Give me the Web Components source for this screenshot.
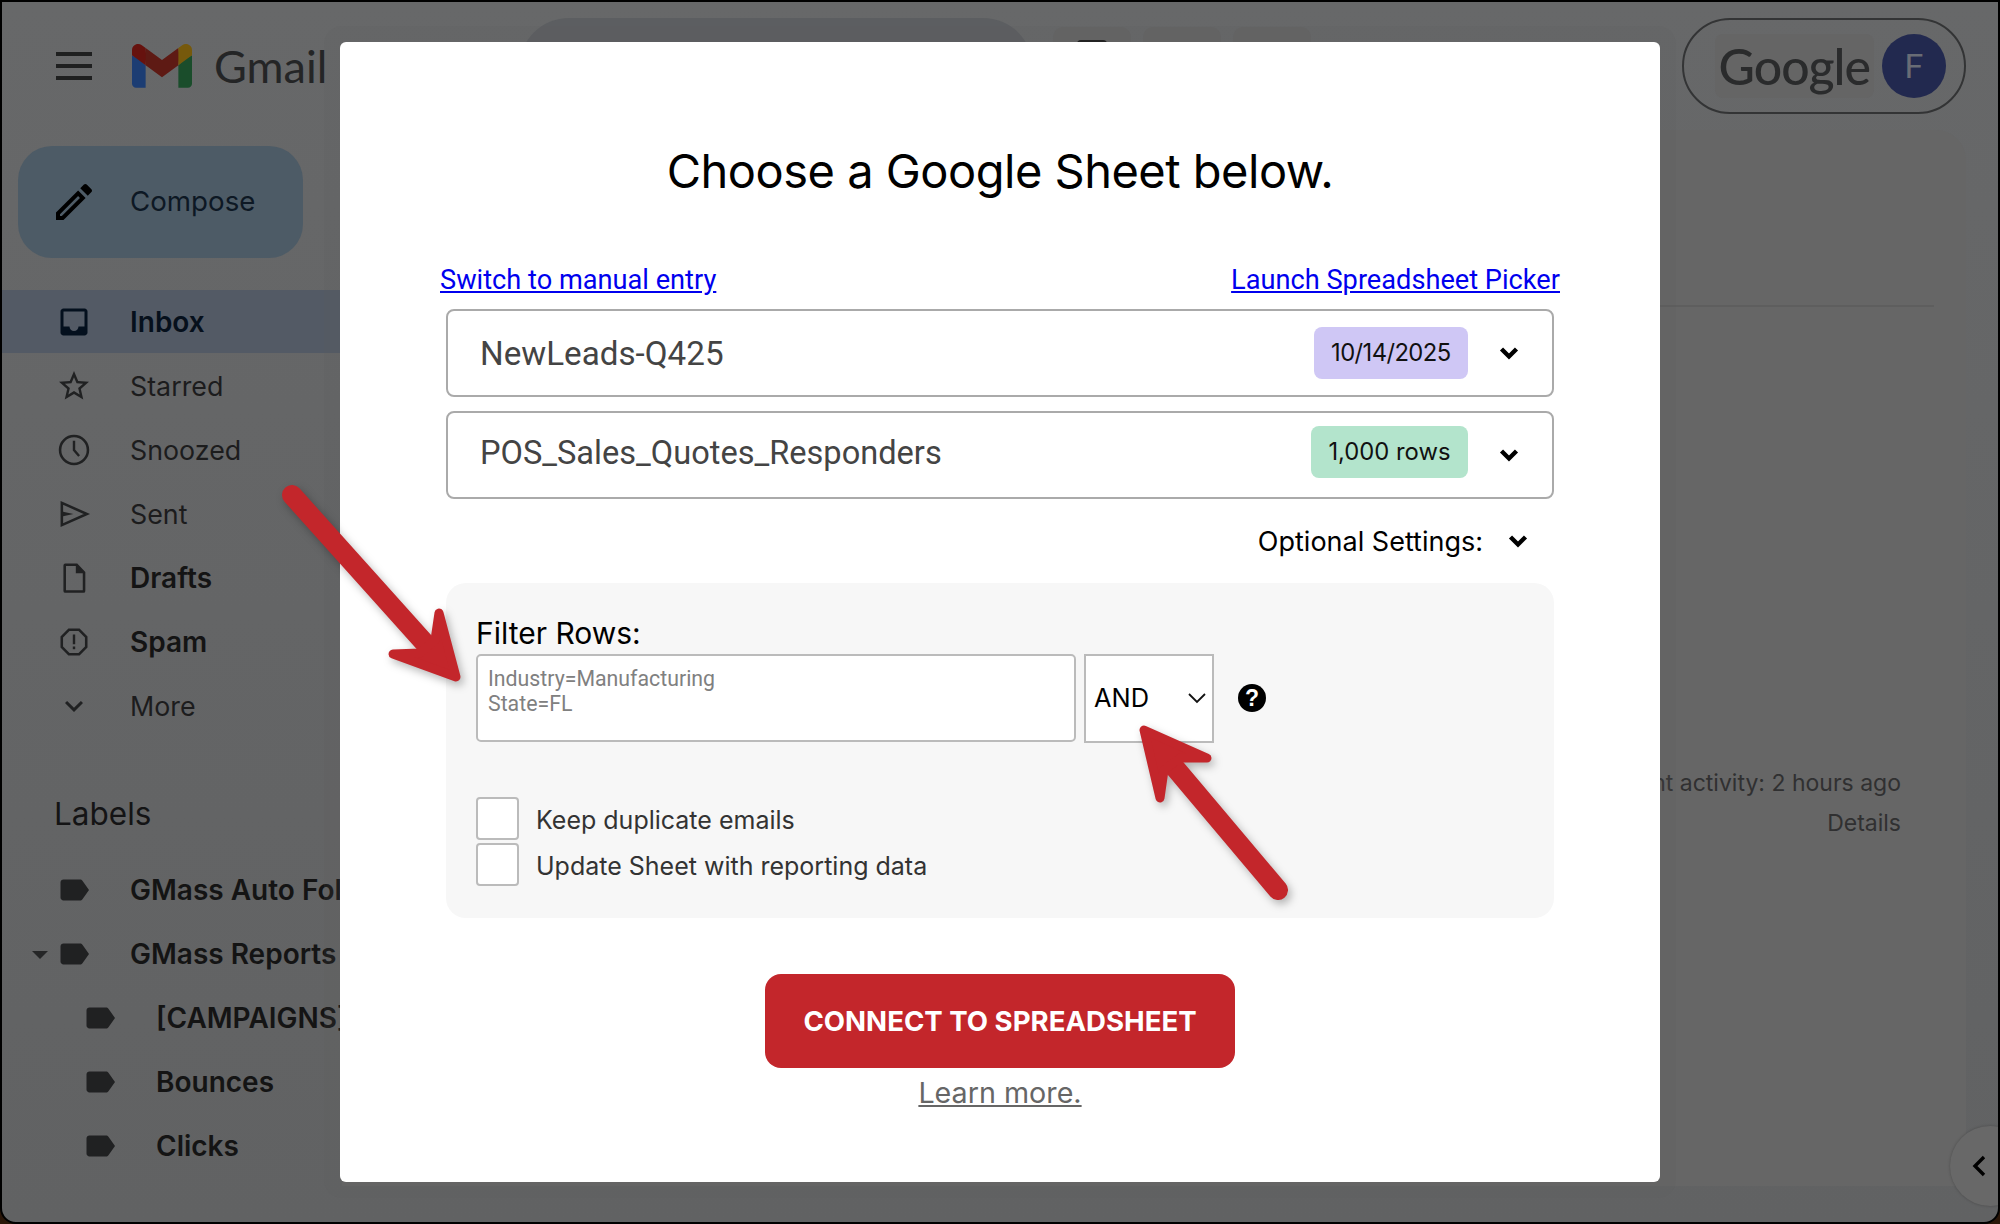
<!DOCTYPE html>
<html lang="en">
<head>
<meta charset="utf-8">
<title>Choose a Google Sheet</title>
<style>
  html, body { margin: 0; padding: 0; background: #000; }
  body { width: 2000px; height: 1224px; overflow: hidden; position: relative; font-family: "Inter", "Liberation Sans", sans-serif; }
</style>
</head>
<body>
<gm-shell>
  <gm-topbar slot="top"></gm-topbar>
  <gm-sidebar slot="side">
    <gm-nav icon="inbox" active bold>Inbox</gm-nav>
    <gm-nav icon="star">Starred</gm-nav>
    <gm-nav icon="clock">Snoozed</gm-nav>
    <gm-nav icon="sent">Sent</gm-nav>
    <gm-nav icon="draft" bold>Drafts</gm-nav>
    <gm-nav icon="spam" bold>Spam</gm-nav>
    <gm-nav icon="more">More</gm-nav>
    <gm-labels-title>Labels</gm-labels-title>
    <gm-nav icon="label" bold>GMass Auto Fol</gm-nav>
    <gm-nav icon="label" bold caret>GMass Reports</gm-nav>
    <gm-nav icon="label" bold sub>[CAMPAIGNS]</gm-nav>
    <gm-nav icon="label" bold sub>Bounces</gm-nav>
    <gm-nav icon="label" bold sub>Clicks</gm-nav>
  </gm-sidebar>
  <gm-main slot="main"></gm-main>
</gm-shell>

<sheet-modal>
  <sheet-select name="NewLeads-Q425" pill="10/14/2025" tone="#cfc7f5" tight></sheet-select>
  <sheet-select name="POS_Sales_Quotes_Responders" pill="1,000 rows" tone="#b3e4cc" lift></sheet-select>
</sheet-modal>

<red-arrows></red-arrows>

<script>
const ICONS = {
  inbox: '<path d="M19 3H5c-1.1 0-2 .9-2 2v14c0 1.1.9 2 2 2h14c1.1 0 2-.9 2-2V5c0-1.1-.9-2-2-2zm0 12h-4c0 1.66-1.35 3-3 3s-3-1.34-3-3H5V5h14v10z"/>',
  star: '<path d="M22 9.24l-7.19-.62L12 2 9.19 8.63 2 9.24l5.46 4.73L5.82 21 12 17.27 18.18 21l-1.63-7.03L22 9.24zM12 15.4l-3.76 2.27 1-4.28-3.32-2.88 4.38-.38L12 6.1l1.71 4.04 4.38.38-3.32 2.88 1 4.28L12 15.4z"/>',
  clock: '<circle cx="12" cy="12" r="9.3" fill="none" stroke="currentColor" stroke-width="1.7"/><path d="M12 5.8V12l3.4 4" fill="none" stroke="currentColor" stroke-width="1.6"/>',
  sent: '<path d="M3.9 4.6 20.6 12 3.9 19.4z" fill="none" stroke="currentColor" stroke-width="1.7" stroke-linejoin="miter"/><path d="M4 10.4l7.6 1.6L4 13.6z"/>',
  draft: '<path d="M6.2 3.2h7.6l4.9 5.2v12.2c0 .2-.2.4-.4.4H6.2c-.2 0-.4-.2-.4-.4V3.6c0-.2.2-.4.4-.4z" fill="none" stroke="currentColor" stroke-width="1.7"/><path d="M13.2 3v5.8h5.6z"/>',
  spam: '<path d="M15.73 3H8.27L3 8.27v7.46L8.27 21h7.46L21 15.73V8.27L15.73 3zM19.3 15L15 19.3H9L4.7 15V9L9 4.7h6L19.3 9v6z"/><rect x="11.2" y="7" width="1.6" height="6.5"/><rect x="11.2" y="15" width="1.6" height="1.8"/>',
  more: '<path d="M7.41 8.59L12 13.17l4.59-4.58L18 10l-6 6-6-6 1.41-1.41z"/>',
  label: '<path d="M17.63 5.84C17.27 5.33 16.67 5 16 5L5 5.01C3.9 5.01 3 5.9 3 7v10c0 1.1.9 1.99 2 1.99L16 19c.67 0 1.27-.33 1.63-.84L22 12l-4.37-6.16z"/>'
};

class GmShell extends HTMLElement {
  constructor() {
    super();
    this.attachShadow({ mode: 'open' }).innerHTML = `
      <style>
        :host { display: block; width: 2000px; height: 1224px; background: #2a1608; }
        .win {
          box-sizing: border-box; width: 2000px; height: 1224px;
          border: 2px solid #000; border-radius: 0 0 16px 16px;
          background: linear-gradient(#676869, #616263);
          display: grid; grid-template-columns: 340px 1fr; grid-template-rows: 128px 1fr;
          overflow: hidden;
        }
        .top { grid-column: 1 / 3; }
      </style>
      <div class="win">
        <div class="top"><slot name="top"></slot></div>
        <slot name="side"></slot>
        <slot name="main"></slot>
      </div>`;
  }
}

class GmTopbar extends HTMLElement {
  constructor() {
    super();
    this.attachShadow({ mode: 'open' }).innerHTML = `
      <style>
        :host { display: flex; align-items: flex-start; height: 128px; position: relative; color: #202122; }
        .burger { width: 36px; height: 28px; margin: 50px 0 0 54px; flex: none; display: flex; flex-direction: column; justify-content: space-between; }
        .burger i { display: block; height: 4px; background: #1f2020; }
        .logo { width: 60px; height: 44px; margin: 42px 0 0 40px; flex: none; }
        .name { margin: 32px 0 0 22px; font: 400 45px/64px "Lato", "Inter", sans-serif; color: #242526; flex: none; width: 305px; }
        .search { width: 514px; height: 100px; margin-top: 16px; background: #5c5e61; border-radius: 50px; flex: none; }
        .tools { display: flex; gap: 12px; margin: 25px 0 0 20px; flex: none; }
        .tools i { display: block; width: 78px; height: 60px; background: #656565; border-radius: 10px; overflow: hidden; }
        .tools i b { display: block; width: 30px; height: 24px; margin: 13px auto 0; background: #1a1a1a; border-radius: 4px 4px 0 0; }
        .pill {
          position: absolute; right: 32px; top: 16px; box-sizing: border-box;
          width: 284px; height: 96px; border: 2px solid #333435; border-radius: 48px;
          display: flex; align-items: center; justify-content: flex-end; padding-right: 18px; gap: 8px;
        }
        .brand { font: 500 50px/64px "Lato", "Inter", sans-serif; color: #2a2b2c; letter-spacing: -1px; background: #656565; border-radius: 8px; padding: 0 4px; }
        .avatar { width: 64px; height: 64px; border-radius: 50%; background: #22294f; color: #696c75; font: 400 34px/64px "Roboto", sans-serif; text-align: center; }
      </style>
      <div class="burger"><i></i><i></i><i></i></div>
      <svg class="logo" viewBox="0 0 256 193" preserveAspectRatio="none">
        <path fill="#1c3d73" d="M58.182 192.05V93.14L27.507 65.077 0 49.504v125.091c0 9.658 7.825 17.455 17.455 17.455h40.727z"/>
        <path fill="#1a4d2b" d="M197.818 192.05h40.727c9.659 0 17.455-7.826 17.455-17.455V49.505l-31.156 17.837-27.026 25.798v98.91z"/>
        <path fill="#5e1a14" d="M58.182 93.14l-4.174-38.647 4.174-36.989L128 69.868l69.818-52.364 4.669 34.992-4.669 40.644L128 145.504z"/>
        <path fill="#76590c" d="M197.818 17.504V93.14L256 49.504V26.231c0-21.585-24.64-33.89-41.89-20.945l-16.292 12.218z"/>
        <path fill="#66120e" d="M0 49.504l26.759 20.07L58.182 93.14V17.504L41.89 5.286C24.61-7.66 0 4.646 0 26.23v23.273z"/>
      </svg>
      <div class="name">Gmail</div>
      <div class="search"></div>
      <div class="tools"><i><b></b></i><i></i><i></i></div>
      <div class="pill"><span class="brand">Google</span><span class="avatar">F</span></div>`;
  }
}

class GmSidebar extends HTMLElement {
  constructor() {
    super();
    this.attachShadow({ mode: 'open' }).innerHTML = `
      <style>
        :host { display: block; width: 340px; overflow: hidden; }
        .compose {
          box-sizing: border-box; width: 285px; height: 112px; margin: 16px 0 32px 16px;
          background: #4d5b66; border-radius: 34px; display: flex; align-items: center; padding-left: 32px;
          font: 400 27.7px/1 "Inter", sans-serif; color: #0d1824;
        }
        .compose svg { width: 48px; height: 48px; margin-right: 32px; flex: none; fill: #000; }
      </style>
      <div class="compose">
        <svg viewBox="0 0 24 24"><path d="M3 17.25V21h3.75L17.81 9.94l-3.75-3.75L3 17.25zM5.92 19H5v-.92l9.06-9.06.92.92L5.92 19zM20.71 5.63l-2.34-2.34c-.2-.2-.45-.29-.71-.29s-.51.1-.7.29l-1.83 1.83 3.75 3.75 1.83-1.83c.39-.39.39-1.02 0-1.41z"/></svg>
        <span>Compose</span>
      </div>
      <slot></slot>`;
  }
}

class GmNav extends HTMLElement {
  connectedCallback() {
    if (this.shadowRoot) return;
    const icon = ICONS[this.getAttribute('icon')] || '';
    this.attachShadow({ mode: 'open' }).innerHTML = `
      <style>
        :host { display: block; height: 64px; color: #1c1c1d; }
        .row { height: 64px; box-sizing: border-box; display: flex; align-items: center; padding-left: 54px; white-space: nowrap; position: relative; font: 400 26.8px/1 "Inter", sans-serif; }
        :host([bold]) .row { font-weight: 600; font-size: 28px; color: #141414; }
        :host([active]) .row { background: #535a65; height: 63px; color: #06101c; }
        :host([sub]) .row { padding-left: 80px; }
        svg { width: 36px; height: 36px; margin-right: 38px; flex: none; fill: currentColor; color: #202122; }
        :host([active]) svg { color: #04101e; }
        .caret { position: absolute; left: 30px; top: 29px; width: 0; height: 0; border: 8px solid transparent; border-top: 8px solid #252627; border-bottom: 0; }
      </style>
      <div class="row">
        ${this.hasAttribute('caret') ? '<i class="caret"></i>' : ''}
        <svg viewBox="0 0 24 24">${icon}</svg><span><slot></slot></span>
      </div>`;
  }
}

class GmLabelsTitle extends HTMLElement {
  constructor() {
    super();
    this.attachShadow({ mode: 'open' }).innerHTML = `
      <style>
        :host { display: block; height: 40px; margin: 56px 0 24px 52px; font: 400 31.5px/40px "Inter", sans-serif; color: #141415; }
      </style><slot></slot>`;
  }
}

class GmMain extends HTMLElement {
  constructor() {
    super();
    this.attachShadow({ mode: 'open' }).innerHTML = `
      <style>
        :host { display: block; position: relative; font: 400 23px/40px "Inter", sans-serif; color: #303031; }
        .card { box-sizing: border-box; width: 1624px; height: 1056px; background: #666; border-radius: 30px 30px 0 0; display: flex; flex-direction: column; align-items: flex-end; padding-right: 65px; }
        .rule { width: 100%; margin-right: -33px; height: 2px; background: #5e5e5e; margin-top: 175px; flex: none; }
        .foot { margin-top: 456px; text-align: right; }
        .tab { position: absolute; right: -32px; bottom: 16px; width: 80px; height: 80px; border-radius: 50%; background: #686868; box-shadow: 0 0 3px rgba(0,0,0,.25); }
        .tab svg { position: absolute; left: 16px; top: 25px; width: 30px; height: 30px; }
      </style>
      <div class="card">
        <div class="rule"></div>
        <div class="foot">Last account activity: 2 hours ago<br>Details</div>
      </div>
      <div class="tab"><svg viewBox="0 0 30 30"><path d="M18 6 9 15l9 9" fill="none" stroke="#000" stroke-width="3.4"/></svg></div>`;
  }
}

class SheetSelect extends HTMLElement {
  connectedCallback() {
    if (this.shadowRoot) return;
    this.attachShadow({ mode: 'open' }).innerHTML = `
      <style>
        :host { display: block; }
        .box { box-sizing: border-box; height: 88px; border: 2px solid #aaa; border-radius: 8px; display: flex; align-items: center; padding: 0 33px 0 32px; background: #fff; }
        .name { flex: 1; font: 400 32.6px/1 "Roboto", sans-serif; color: #444; }
        .pill { height: 52px; padding: 0 17.5px; border-radius: 8px; display: flex; align-items: center; font: 400 23.8px/1 "Inter", sans-serif; color: #111; background: ${this.getAttribute('tone')}; }
        :host([tight]) .pill { letter-spacing: -.6px; }
        :host([tight]) .name { font-size: 33.2px; padding-top: 1px; }
        :host([lift]) .name { margin-bottom: 4px; }
        :host([lift]) .pill { margin-bottom: 6px; }
        svg { width: 20px; height: 14px; margin-left: 31px; }
      </style>
      <div class="box">
        <span class="name">${this.getAttribute('name')}</span>
        <span class="pill">${this.getAttribute('pill')}</span>
        <svg viewBox="0 0 20 14"><path d="M2.5 3 10 10.5 17.5 3" fill="none" stroke="#000" stroke-width="4.4"/></svg>
      </div>`;
  }
}

class CheckRow extends HTMLElement {
  constructor() {
    super();
    this.attachShadow({ mode: 'open' }).innerHTML = `
      <style>
        :host { display: flex; align-items: center; height: 42px; gap: 17px; font: 400 25px/42px "Inter", sans-serif; color: #333; }
        i { box-sizing: border-box; width: 43px; height: 43px; flex: none; border: 2px solid #bbb; border-radius: 4px; background: #fff; }
        span { padding-top: 3px; }
      </style><i></i><span><slot></slot></span>`;
  }
}

class FilterPanel extends HTMLElement {
  constructor() {
    super();
    this.attachShadow({ mode: 'open' }).innerHTML = `
      <style>
        :host { display: block; box-sizing: border-box; height: 335px; background: #f7f7f7; border-radius: 20px; padding: 30px 0 0 30px; }
        .head { font: 400 30px/40px "Inter", sans-serif; color: #000; height: 41px; }
        .row { display: flex; align-items: center; gap: 8px; height: 88px; }
        .area { box-sizing: border-box; width: 600px; height: 88px; border: 2px solid #bbb; border-radius: 5px; background: #fff; padding: 10px 10px; font: 400 21.3px/25px "Roboto", sans-serif; color: #808080; }
        .sel { box-sizing: border-box; width: 130px; height: 89px; border: 2px solid #bbb; background: #fff; display: flex; align-items: center; justify-content: space-between; padding: 0 5px 0 8px; font: 400 25.4px/1 "Inter", sans-serif; color: #000; }
        .sel svg { width: 20px; height: 12px; }
        .help { width: 28px; height: 28px; margin-left: 16px; flex: none; }
        .checks { display: flex; flex-direction: column; gap: 4px; margin-top: 55px; }
      </style>
      <div class="head">Filter Rows:</div>
      <div class="row">
        <div class="area">Industry=Manufacturing<br>State=FL</div>
        <div class="sel"><span>AND</span><svg viewBox="0 0 20 12"><path d="M2 2l8 8 8-8" fill="none" stroke="#111" stroke-width="1.8"/></svg></div>
        <svg class="help" viewBox="0 0 28 28"><circle cx="14" cy="14" r="14" fill="#000"/><text x="14" y="22" text-anchor="middle" font-family="Liberation Sans, sans-serif" font-weight="700" font-size="23" fill="#fff">?</text></svg>
      </div>
      <div class="checks">
        <check-row>Keep duplicate emails</check-row>
        <check-row>Update Sheet with reporting data</check-row>
      </div>`;
  }
}

class SheetModal extends HTMLElement {
  constructor() {
    super();
    this.attachShadow({ mode: 'open' }).innerHTML = `
      <style>
        :host { position: absolute; left: 340px; top: 42px; box-sizing: border-box; width: 1320px; height: 1140px; background: #fff; border-radius: 6px; padding: 99px 106px 0; box-shadow: 0 0 0 16px rgba(90,92,95,.14); font-family: "Inter", sans-serif; }
        h1 { margin: 0; text-align: center; font: 400 47px/60px "Inter", sans-serif; color: #000; letter-spacing: -.5px; }
        .links { display: flex; justify-content: space-between; margin: 64px -6px 14px; font: 400 27.2px/30px "Roboto", sans-serif; }
        .links a { color: #00e; text-decoration: underline; }
        .stack { display: flex; flex-direction: column; gap: 14px; }
        .opt { display: flex; justify-content: flex-end; align-items: center; height: 42px; margin: 21px 26px 21px 0; font: 400 27px/42px "Inter", sans-serif; color: #000; }
        .opt span { padding-top: 2px; }
        .opt svg { width: 20px; height: 14px; margin-left: 25px; }
        .go { display: block; box-sizing: border-box; width: 470px; height: 94px; margin: 56px auto 7px; background: #c3262b; color: #fff; border-radius: 16px; text-align: center; font: 700 27.6px/94px "Inter", sans-serif; }
        .more { display: block; text-align: center; font: 400 28.7px/36px "Inter", sans-serif; color: #666; text-decoration: underline; }
      </style>
      <h1>Choose a Google Sheet below.</h1>
      <div class="links"><a>Switch to manual entry</a><a>Launch Spreadsheet Picker</a></div>
      <div class="stack"><slot></slot></div>
      <div class="opt"><span>Optional Settings:</span><svg viewBox="0 0 20 14"><path d="M2.5 3 10 10.5 17.5 3" fill="none" stroke="#000" stroke-width="4.4"/></svg></div>
      <filter-panel></filter-panel>
      <div class="go">CONNECT TO SPREADSHEET</div>
      <a class="more">Learn more.</a>`;
  }
}

class RedArrows extends HTMLElement {
  constructor() {
    super();
    this.attachShadow({ mode: 'open' }).innerHTML = `
      <style>
        :host { position: absolute; left: 0; top: 0; width: 2000px; height: 1224px; pointer-events: none; }
        svg { display: block; filter: drop-shadow(3px 4px 4px rgba(0,0,0,.28)); }
        .shaft { fill: none; stroke: #c3262b; stroke-width: 20; stroke-linecap: round; }
        .head { fill: #c3262b; stroke: #c3262b; stroke-width: 9; stroke-linejoin: round; }
      </style>
      <svg width="2000" height="1224" viewBox="0 0 2000 1224">
        <path class="shaft" d="M292 495 440 660"/>
        <path class="head" d="M456 677 439 613 435 640 420 653 393 654z"/>
        <path class="shaft" d="M1278 890 1160 750"/>
        <path class="head" d="M1144 730 1160 798 1164 770 1180 758 1207 758z"/>
      </svg>`;
  }
}

customElements.define('gm-shell', GmShell);
customElements.define('gm-topbar', GmTopbar);
customElements.define('gm-sidebar', GmSidebar);
customElements.define('gm-nav', GmNav);
customElements.define('gm-labels-title', GmLabelsTitle);
customElements.define('gm-main', GmMain);
customElements.define('sheet-select', SheetSelect);
customElements.define('check-row', CheckRow);
customElements.define('filter-panel', FilterPanel);
customElements.define('sheet-modal', SheetModal);
customElements.define('red-arrows', RedArrows);
</script>
</body>
</html>
